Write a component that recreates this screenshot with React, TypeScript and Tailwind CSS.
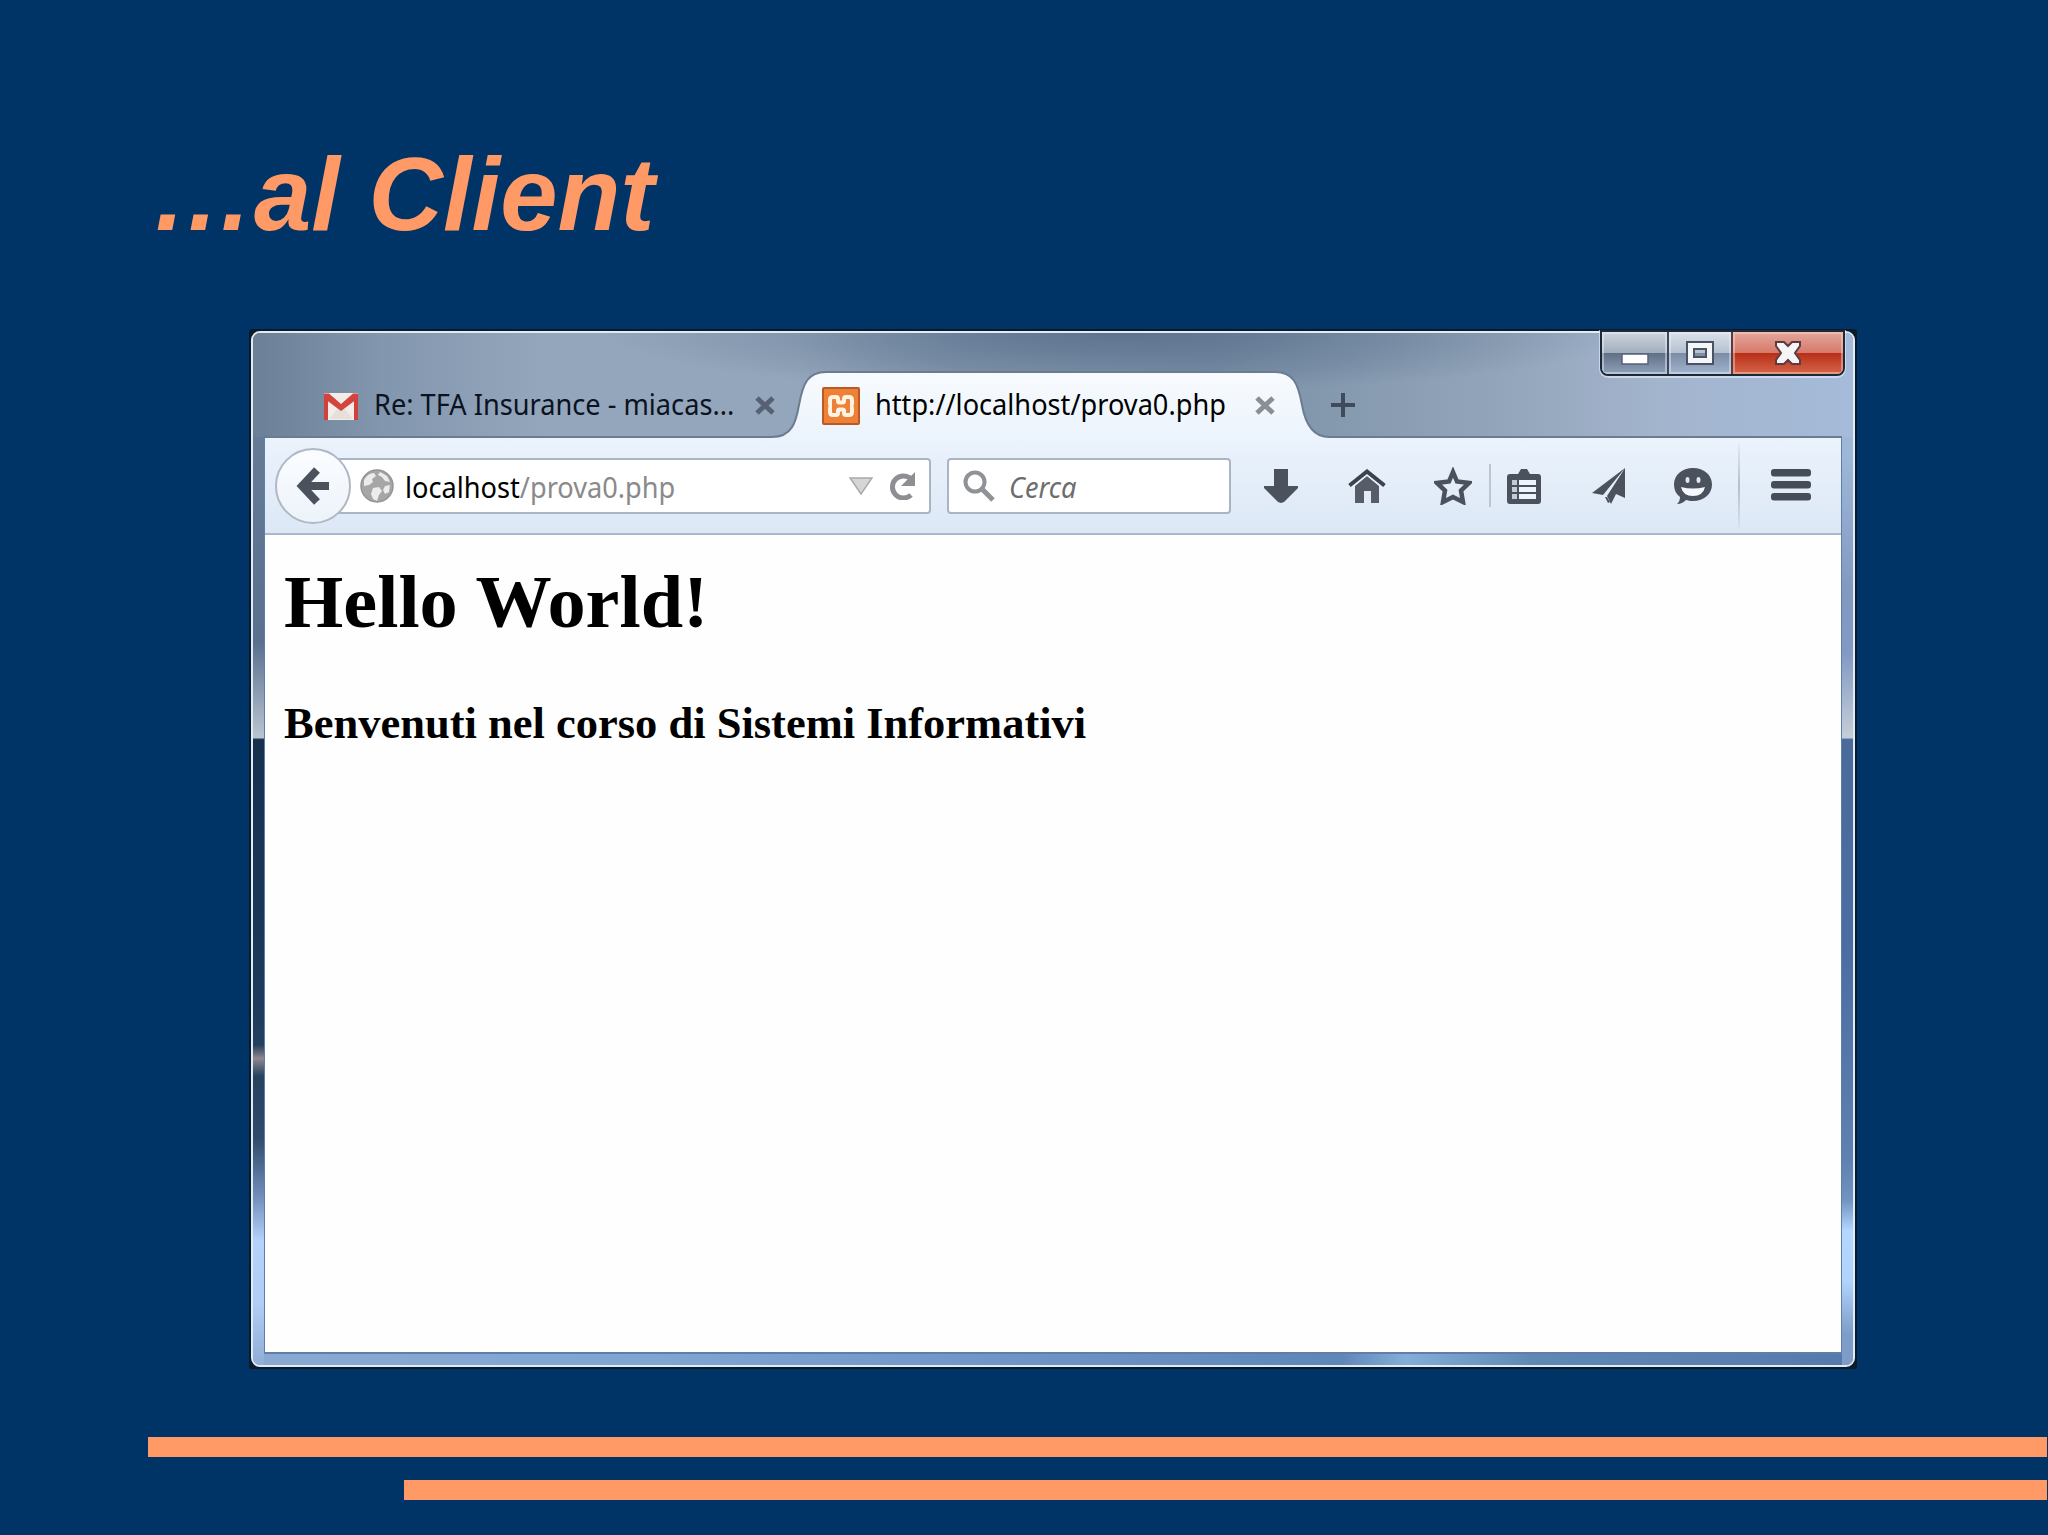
import type { ReactNode } from "react";

function Label({ className, children }: { className: string; children: ReactNode }) {
  return (
    <div className={`shrink-0 font-['Noto_Sans','Open_Sans',sans-serif] text-[29px] leading-10 whitespace-pre ${className}`}>
      <span className="inline-block origin-left scale-x-[0.937]">{children}</span>
    </div>
  );
}

function CloseGlyph({ className }: { className: string }) {
  return (
    <svg viewBox="0 0 20 19" className={`h-[19px] w-5 shrink-0 ${className}`} stroke="currentColor" strokeWidth="5" fill="none">
      <path d="M2 2 18 17M18 2 2 17" />
    </svg>
  );
}

function GmailIcon() {
  return (
    <svg viewBox="0 0 34 27" className="h-[27px] w-[34px] shrink-0">
      <rect width="34" height="27" rx="1.5" fill="#f3ece8" />
      <path d="M5 26 14 15h6l9 11z" fill="#e6e0da" />
      <path d="M0 1h4v26H0zM30 1h4v26h-4z" fill="#d0413c" />
      <path d="M1 .5h4L17 11 29 .5h4V6L17 18 1 6z" fill="#d2453f" />
    </svg>
  );
}

function XamppIcon() {
  return (
    <svg viewBox="0 0 38 38" className="h-[38px] w-[38px] shrink-0">
      <rect x="1" y="1" width="36" height="36" rx="1" fill="#ee8038" stroke="#b85a24" strokeWidth="2" />
      <path
        d="M11 10h3q2 0 2 2v2q0 1.500 1.500 1.500h3Q22 15.500 22 14v-2q0-2 2-2h3q3 0 3 3v3q0 3-2 3 2 0 2 3v3q0 3-3 3h-3q-2 0-2-2v-2q0-1.500-1.500-1.500h-3Q16 22.500 16 24v2q0 2-2 2h-3q-3 0-3-3v-3q0-3 2-3-2 0-2-3v-3q0-3 3-3z"
        fill="#ee8038"
        stroke="#fff3e2"
        strokeWidth="4"
      />
    </svg>
  );
}

function GlobeIcon() {
  return (
    <svg viewBox="0 0 34 34" className="h-[34px] w-[34px] shrink-0">
      <circle cx="17" cy="17" r="16" fill="#a6a6a6" stroke="#949494" strokeWidth="1.500" />
      <path
        d="M4 11q4-7 10-7l2 3-4 3 1 3-4 3-5 1zM20 3l7 4 3 6-5-1-3-4-4-2zM13 19l6-1 3 4-3 4-2 6-4-2-2-5zM25 17l5-1-1 7-4 2-2-4z"
        fill="#ececec"
      />
    </svg>
  );
}

function WindowControls() {
  return (
    <div className="absolute -top-[3px] -right-[3px] flex h-[46px] w-[245px] overflow-hidden rounded-b-[8px] border-2 border-[#1d2938] shadow-[0_1px_0_1px_rgba(220,232,245,0.7)]">
      <div className="flex w-[67px] shrink-0 items-center justify-center border-r-2 border-[#3c4a5f] bg-[linear-gradient(180deg,#ccd4de_0%,#a3afbe_49%,#607085_51%,#8fa1ba_100%)] shadow-[inset_0_0_0_2px_rgba(235,242,250,0.45)]">
        <svg viewBox="0 0 28 12" className="mt-3 h-3 w-7">
          <rect x="1" y="1" width="26" height="10" fill="#fff" stroke="#55617a" strokeWidth="1.500" />
        </svg>
      </div>
      <div className="flex w-[64px] shrink-0 items-center justify-center border-r-2 border-[#5a3a45] bg-[linear-gradient(180deg,#dae1eb_0%,#b6c1d0_49%,#7c8ca5_51%,#a0b3cd_100%)] shadow-[inset_0_0_0_2px_rgba(235,242,250,0.45)]">
        <svg viewBox="0 0 28 24" className="h-6 w-7" fillRule="evenodd" stroke="#4a5366" strokeWidth="2">
          <path d="M1 1h26v22H1zM8 8v8h12V8z" fill="#f4f6f9" />
        </svg>
      </div>
      <div className="flex flex-1 items-center justify-center bg-[linear-gradient(180deg,#e3a79c_0%,#d67a6b_49%,#b92f18_51%,#d4664a_100%)] shadow-[inset_0_0_0_2px_rgba(255,215,200,0.45)]">
        <svg viewBox="0 0 28 24" className="h-6 w-7">
          <path d="M2 1h8l4 4 4-4h8v4l-5 7 5 7v4h-8l-4-4-4 4H2v-4l5-7-5-7z" fill="#f5f5f5" stroke="#5e3b40" strokeWidth="2" />
        </svg>
      </div>
    </div>
  );
}

function TabStrip() {
  return (
    <div className="relative mx-[11px] flex h-[105px] shrink-0 border-b-2 border-[#6b7c91] pt-[57px]">
      <div className="ml-[60px] flex h-8 w-[448px] shrink-0 items-center">
        <GmailIcon />
        <Label className="mb-[5px] ml-4 w-[381px] text-[#0b1220]">Re: TFA Insurance - miacas...</Label>
        <CloseGlyph className="mb-0.5 text-[#566273]" />
      </div>
      <div className="relative -mt-[19px] h-[69px] w-[557px] shrink-0">
        {/* rounded tab outline that flares into the toolbar */}
        <svg viewBox="0 0 557 69" className="absolute inset-0 h-[69px] w-[557px]">
          <defs>
            <linearGradient id="tab" x1="0" y1="0" x2="0" y2="1">
              <stop offset="0" stopColor="#f8fbfe" />
              <stop offset="1" stopColor="#ebf3fc" />
            </linearGradient>
          </defs>
          <path d="M0 66C20 66 24 51 27 34C31 12 36 1 54 1H503C521 1 526 12 530 34C533 51 540 66 557 66V69H0z" fill="url(#tab)" />
          <path d="M0 66C20 66 24 51 27 34C31 12 36 1 54 1H503C521 1 526 12 530 34C533 51 540 66 557 66" fill="none" stroke="#6b7c91" strokeWidth="2" />
        </svg>
        <div className="relative flex h-[69px] items-center pl-[50px]">
          <XamppIcon />
          <Label className="mb-1 ml-[15px] w-[380px] text-black">http://localhost/prova0.php</Label>
          <CloseGlyph className="text-[#8b8f95]" />
        </div>
      </div>
      <svg viewBox="0 0 24 24" className="mt-[3px] ml-[2px] h-6 w-6 shrink-0" stroke="#3f4b5c" strokeWidth="4">
        <path d="M12 0v24M0 12h24" />
      </svg>
      <WindowControls />
    </div>
  );
}

function ToolbarIcons() {
  return (
    <div className="flex h-full items-center">
      <svg viewBox="0 0 34 34" className="ml-[33px] h-[34px] w-[34px] fill-[#4b525e]">
        <path d="M10 0h14v17h10v2L20 33l-3 1-3-1L0 19v-2h10z" />
      </svg>
      <svg viewBox="0 0 38 34" className="ml-[50px] h-[34px] w-[38px]">
        <path d="m19 7 12 10v17h-8V22h-7v12H7V17z" fill="#565d69" />
        <path d="M4 18 19 6l15 12" fill="none" stroke="#e9f1fa" strokeWidth="1.500" />
        <path d="M1.500 16.500 19 2.500l17.500 14" fill="none" stroke="#3c434f" strokeWidth="4" />
      </svg>
      <svg viewBox="0 0 38 38" className="ml-12 h-[38px] w-[38px]" fill="none" stroke="#4b525e" strokeWidth="4.500">
        <path d="m19 5 4 9.500 12 1.500-8 7.500L29 35l-10-5-10 5 2-11.500L3 16l12-1.500z" />
      </svg>
      <span className="ml-[17px] h-[43px] w-0.5 bg-[#bcc5d1]" />
      <svg viewBox="0 0 34 36" className="ml-4 h-9 w-[34px]">
        <path d="M3 6h8l3-5h6l3 5h8q3 0 3 3v24q0 3-3 3H3q-3 0-3-3V9q0-3 3-3z" fill="#4b525e" />
        <path d="M5 12h5v5H5zM5 19h5v5H5zM5 26h5v5H5z" fill="#c3cbd6" />
        <path d="M12 12h17v5H12zM12 19h17v5H12zM12 26h17v5H12z" fill="#eef4fb" />
      </svg>
      <svg viewBox="0 0 34 36" className="ml-[51px] h-9 w-[34px] fill-[#4b525e]">
        <path d="M33 0 0 25l11 2zM33 0v30l-9-4-5 10-4-8z" />
        <path d="m13 29 2 0 3 5-2 1z" />
      </svg>
      <svg viewBox="0 0 38 36" className="ml-12 h-9 w-[38px]">
        <path d="M19 0c11 0 19 7 19 16.500S30 33 19 33c-3 0-5-.5-7-1-2 2-5 4-9 4 2-2 3-4 3-7-4-3-6-7-6-12.500C0 7 8 0 19 0z" fill="#4b525e" />
        <ellipse cx="13.500" cy="12" rx="2" ry="3" fill="#dfe7f1" />
        <ellipse cx="24.500" cy="12" rx="2" ry="3" fill="#dfe7f1" />
        <path d="M7 19q12 3 24 0-2 9-12 9T7 19z" fill="#f4f8fc" />
      </svg>
      <span className="ml-[26px] h-[86px] w-0.5 bg-gradient-to-b from-[#e3ecf6] via-[#b3bfce] to-[#d8e3ef]" />
      <svg viewBox="0 0 40 32" className="mb-0.5 ml-[31px] h-8 w-10 fill-[#464d59]">
        <rect width="40" height="7.500" rx="3" />
        <rect y="12" width="40" height="7.500" rx="3" />
        <rect y="24" width="40" height="7.500" rx="3" />
      </svg>
    </div>
  );
}

function NavBar() {
  return (
    <div className="flex h-[97px] items-center border-b-2 border-[#a9b8cc] bg-gradient-to-b from-[#ebf3fc] to-[#dce8f6]">
      <div className="z-10 ml-2.5 flex h-[76px] w-[76px] shrink-0 items-center justify-center rounded-full border-2 border-[#b0b8c4] bg-gradient-to-b from-[#fbfdff] to-[#edf3fb]">
        <svg viewBox="0 0 34 38" className="h-[38px] w-[34px]" fill="none" stroke="#4b525e" strokeWidth="8">
          <path d="M33 19H8M21 3 6 19l15 16" />
        </svg>
      </div>
      <div className="-ml-[30px] flex h-14 w-[610px] shrink-0 items-center rounded-[4px] border-2 border-[#aab5c3] bg-white pl-[37px]">
        <GlobeIcon />
        <Label className="mt-0.5 ml-[11px] w-[444px] text-[#8a8a8a]">
          <span className="text-black">localhost</span>/prova0.php
        </Label>
        <svg viewBox="0 0 24 18" className="h-[18px] w-6 shrink-0">
          <path d="M1 1h22L12 17z" fill="#d6d6d6" stroke="#a9a9a9" strokeWidth="1.500" />
        </svg>
        <svg viewBox="0 0 28 28" className="ml-[15px] h-7 w-7 shrink-0">
          <path d="M23 23a11 11 0 1 1 0-16" fill="none" stroke="#8d8f93" strokeWidth="5" />
          <path d="M27 0v14H13z" fill="#8d8f93" />
        </svg>
      </div>
      <div className="ml-4 flex h-14 w-[284px] shrink-0 items-center rounded-[4px] border-2 border-[#aab5c3] bg-white pl-[14px]">
        <svg viewBox="0 0 32 32" className="h-8 w-8 shrink-0" fill="none" stroke="#8f9296">
          <circle cx="12" cy="12" r="9.500" strokeWidth="4" />
          <path d="m19 19 11 11" strokeWidth="5" />
        </svg>
        <Label className="mt-0.5 ml-[14px] text-[#6d6d6d] italic">Cerca</Label>
      </div>
      <ToolbarIcons />
    </div>
  );
}

function Page() {
  return (
    <div className="flex-1 bg-[#fefefe] pt-[25px] pl-[19px] font-['Liberation_Serif',serif] font-bold text-black">
      <h2 className="origin-left scale-x-[1.017] text-[75px] leading-[84px]">Hello World!</h2>
      <p className="mt-[54px] text-[44.5px] leading-[50px]">Benvenuti nel corso di Sistemi Informativi</p>
    </div>
  );
}

// Glass edges are drawn as three strips around the client area
function BrowserWindow() {
  return (
    <section className="ml-[249px] h-[1040px] w-[1608px] shrink-0 rounded-[3px] bg-[#0b1a29] p-0.5">
      <div className="relative h-full w-full rounded-[9px] border-2 border-[#dfebf5] bg-[linear-gradient(90deg,#89a9d2_0%,#7fa5d3_25%,#6c93c4_50%,#5f86b8_68%,#84add8_72%,#5f88b5_80%,#5679ac_100%)]">
        <div className="absolute inset-y-0 left-0 w-[11px] rounded-l-[7px] bg-[linear-gradient(180deg,#6d8199_0%,#5f7591_20%,#5a7090_30%,#b9c4d0_39.200%,#16304e_39.400%,#1d3a5c_65%,#25405e_69%,#8f8790_70.300%,#27425f_72%,#2f4a6a_78%,#7792c0_84%,#b4d2fb_88%,#b2cdf5_94%,#8fadd6_100%)]" />
        <div className="absolute inset-y-0 right-0 w-[11px] rounded-r-[7px] bg-[linear-gradient(180deg,#a5bbd8_0%,#9db7d8_12%,#8199bf_25%,#8299c3_31%,#c5ced8_39.200%,#4a6b9a_39.400%,#4b6da2_60%,#5f80b0_80%,#7292c0_84%,#b4d6ff_87%,#b0d2fb_92%,#7d9cc7_97%)]" />
        <div className="absolute inset-x-0 top-0 h-[104px] rounded-t-[7px] bg-[linear-gradient(90deg,#6b7f97_0%,#8296ad_8%,#94a6bc_18%,#94a6bb_34%,#8497ae_44%,#7c90a8_60%,#8599af_68%,#93a5ba_78%,#a3b4cd_88%,#a5bbd9_100%)]" />
        <div className="absolute inset-x-0 top-0 h-[60px] rounded-t-[7px] bg-[radial-gradient(ellipse_32%_100%_at_54%_0%,rgba(70,95,125,0.6),rgba(70,95,125,0))]" />
        <div className="relative flex h-full flex-col">
          <TabStrip />
          <div className="mx-[11px] mb-[11px] flex flex-1 flex-col border-x border-b-2 border-[#5f7fa8]">
            <NavBar />
            <Page />
          </div>
        </div>
      </div>
    </section>
  );
}

export default function App() {
  return (
    <main className="flex h-[1535px] w-[2048px] flex-col overflow-hidden bg-[#003366] pt-[135px]">
      <h1 className="mb-[74px] pl-[151px] font-['Liberation_Sans',sans-serif] text-[103px] leading-[120px] font-bold text-[#ff9966] italic">
        …al Client
      </h1>
      <BrowserWindow />
      <div className="mt-[68px] mr-px ml-[148px] h-5 shrink-0 bg-[#ff9966]" />
      <div className="mt-[23px] mr-px ml-[404px] h-5 shrink-0 bg-[#ff9966]" />
    </main>
  );
}
